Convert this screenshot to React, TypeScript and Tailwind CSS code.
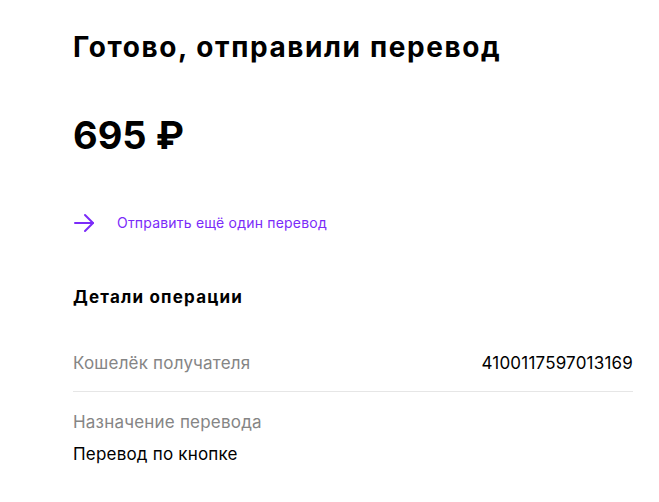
const DETAILS = [
  { label: "Кошелёк получателя", value: "4100117597013169", inline: true },
  { label: "Назначение перевода", value: "Перевод по кнопке", inline: false },
];

export default function App() {
  return (
    <div className="min-h-[502px] w-full bg-white font-['Inter','Noto_Sans',sans-serif] text-black">
      <div className="ml-[73px] w-[560px] pt-[28px]">
        <h1 className="text-[28px] font-bold leading-[38px] tracking-[1.6px]">
          Готово, отправили перевод
        </h1>

        <p className="mt-[47px] text-[38px] font-bold leading-[44px]">695 ₽</p>

        <a href="#" className="mt-[56px] flex items-center gap-[22px] text-[14px] leading-[20px] tracking-[0.2px] text-[#7b2bf9]">
          <svg width="22" height="20" viewBox="0 0 22 20" fill="none" stroke="#7b2bf9" strokeWidth="2" strokeLinecap="round" strokeLinejoin="round">
            <path d="M2 10h18" />
            <path d="M12 2l8 8-8 8" />
          </svg>
          Отправить ещё один перевод
        </a>

        <h2 className="mt-[52px] text-[17px] font-bold leading-[24px] tracking-[1.2px]">Детали операции</h2>

        <div className="mt-[42px] text-[17px] leading-[24px] tracking-[0.2px]">
          {DETAILS.map((d, i) =>
            d.inline ? (
              <div key={d.label} className="flex items-center justify-between pb-[16px]">
                <span className="text-[#858585]">{d.label}</span>
                <span>{d.value}</span>
              </div>
            ) : (
              <div key={d.label} className={i > 0 ? "border-t border-[#e6e6e6] pt-[18px]" : ""}>
                <div className="text-[#858585]">{d.label}</div>
                <div className="mt-[8px]">{d.value}</div>
              </div>
            )
          )}
        </div>
      </div>
    </div>
  );
}
